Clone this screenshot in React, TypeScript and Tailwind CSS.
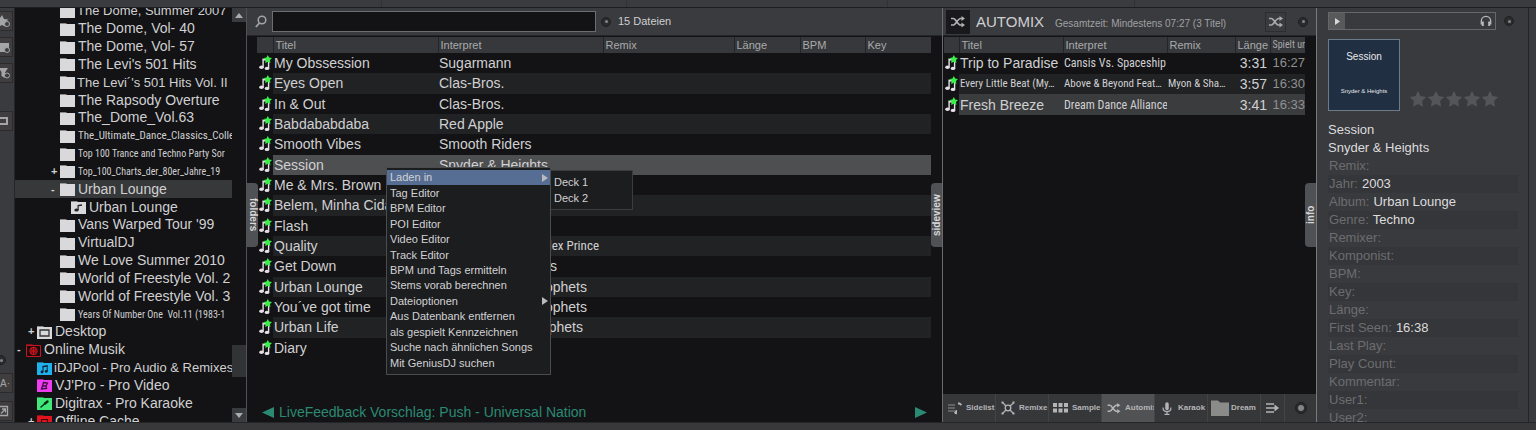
import type { ReactNode } from "react";
import { clsx } from "clsx";

const CONDENSED = "font-['Roboto_Condensed','Liberation_Sans',sans-serif]";

type IconKind = "folder" | "list" | "desktop" | "online" | "idj" | "vj" | "digi" | "offline";

type TreeNode = {
  name: string;
  level: 0 | 1 | 2 | 3;
  icon?: IconKind;
  mark?: "+" | "-";
  fit?: "tight" | "narrow" | "narrower";
  selected?: boolean;
};

const TREE: TreeNode[] = [
  { name: "The Dome, Summer 2007", level: 2, fit: "tight" },
  { name: "The Dome, Vol- 40", level: 2 },
  { name: "The Dome, Vol- 57", level: 2 },
  { name: "The Levi's 501 Hits", level: 2 },
  { name: "The Levi´'s 501 Hits Vol. II", level: 2, fit: "tight" },
  { name: "The Rapsody Overture", level: 2 },
  { name: "The_Dome_Vol.63", level: 2 },
  { name: "The_Ultimate_Dance_Classics_Colle", level: 2, fit: "narrow" },
  { name: "Top 100 Trance and Techno Party Sor", level: 2, fit: "narrower" },
  { name: "Top_100_Charts_der_80er_Jahre_19", level: 2, mark: "+", fit: "narrower" },
  { name: "Urban Lounge", level: 2, mark: "-", selected: true },
  { name: "Urban Lounge", level: 3, icon: "list" },
  { name: "Vans Warped Tour '99", level: 2 },
  { name: "VirtualDJ", level: 2 },
  { name: "We Love Summer 2010", level: 2 },
  { name: "World of Freestyle Vol. 2", level: 2 },
  { name: "World of Freestyle Vol. 3", level: 2 },
  { name: "Years Of Number One  Vol.11 (1983-1", level: 2, fit: "narrower" },
  { name: "Desktop", level: 1, icon: "desktop", mark: "+" },
  { name: "Online Musik", level: 0, icon: "online", mark: "-" },
  { name: "iDJPool - Pro Audio & Remixes", level: 1, icon: "idj", fit: "tight" },
  { name: "VJ'Pro - Pro Video", level: 1, icon: "vj" },
  { name: "Digitrax - Pro Karaoke", level: 1, icon: "digi" },
  { name: "Offline Cache", level: 1, icon: "offline", mark: "+" },
];

type Track = { title: string; artist: ReactNode; selected?: boolean };

const TRACKS: Track[] = [
  { title: "My Obssession", artist: "Sugarmann" },
  { title: "Eyes Open", artist: "Clas-Bros." },
  { title: "In & Out", artist: "Clas-Bros." },
  { title: "Babdababdaba", artist: "Red Apple" },
  { title: "Smooth Vibes", artist: "Smooth Riders" },
  { title: "Session", artist: "Snyder & Heights", selected: true },
  { title: "Me & Mrs. Brown", artist: "" },
  { title: "Belem, Minha Cidade", artist: "" },
  { title: "Flash", artist: "" },
  {
    title: "Quality",
    artist: <span className={clsx("block w-[160px] text-right text-[13px]", CONDENSED)}>Alex Prince</span>,
  },
  { title: "Get Down", artist: <span className="block w-[118px] text-right">Riders</span> },
  { title: "Urban Lounge", artist: <span className="block w-[148px] text-right">Prophets</span> },
  { title: "You´ve got time", artist: <span className="block w-[148px] text-right">Prophets</span> },
  { title: "Urban Life", artist: <span className="block w-[144px] text-right">Prophets</span> },
  { title: "Diary", artist: "" },
];

const AUTOMIX = [
  { title: "Trip to Paradise", artist: "Cansis Vs. Spaceship", remix: "", len: "3:31", at: "16:27" },
  { title: "Every Little Beat (My…", artist: "Above & Beyond Feat…", remix: "Myon & Sha…", len: "3:57", at: "16:30" },
  { title: "Fresh Breeze", artist: "Dream Dance Alliance", remix: "", len: "3:41", at: "16:33" },
];

const MENU = [
  "Laden in",
  "Tag Editor",
  "BPM Editor",
  "POI Editor",
  "Video Editor",
  "Track Editor",
  "BPM und Tags ermitteln",
  "Stems vorab berechnen",
  "Dateioptionen",
  "Aus Datenbank entfernen",
  "als gespielt Kennzeichnen",
  "Suche nach ähnlichen Songs",
  "Mit GeniusDJ suchen",
];

const INFO = [
  ["Remix", ""],
  ["Jahr", "2003"],
  ["Album", "Urban Lounge"],
  ["Genre", "Techno"],
  ["Remixer", ""],
  ["Komponist", ""],
  ["BPM", ""],
  ["Key", ""],
  ["Länge", ""],
  ["First Seen", "16:38"],
  ["Last Play", ""],
  ["Play Count", ""],
  ["Kommentar", ""],
  ["User1", ""],
  ["User2", ""],
];

const FOLDER_FILL: Record<IconKind, string> = {
  folder: "#d9d9db",
  list: "#d9d9db",
  desktop: "#d9d9db",
  online: "#c8141e",
  idj: "#1fb0ee",
  vj: "#f03cf0",
  digi: "#3fe878",
  offline: "#e0141e",
};

function FolderIcon({ kind = "folder" }: { kind?: IconKind }) {
  const fill = FOLDER_FILL[kind];
  return (
    <svg viewBox="0 0 15 14" className="h-[14px] w-[15px] shrink-0">
      <path d="M0 1h6l1.5 1.5H0z" fill={fill} opacity={0.6} />
      {kind === "online" ? (
        <path d="M.5 2.5h14v11H.5z" fill="#1c0a0c" stroke={fill} />
      ) : (
        <path d="M0 2h15v12H0z" fill={fill} />
      )}
      {kind === "list" && (
        <g fill="#222">
          <ellipse cx="5.5" cy="10" rx="2.2" ry="1.6" />
          <path d="M6.500 5h1.200v5H6.500zM6.500 5l4.500-.8v1.600l-4.500.8z" />
        </g>
      )}
      {kind === "desktop" && <path d="M3 5h9v6H3z" fill="none" stroke="#333" strokeWidth={1.3} />}
      {kind === "online" && (
        <g fill="none" stroke={fill} strokeWidth={1.1}>
          <circle cx="7.5" cy="8" r="3.6" />
          <path d="M4 8h7M7.5 4.4v7.2M5.5 5.2c1 1.8 1 3.8 0 5.6M9.5 5.2c-1 1.8-1 3.8 0 5.6" />
        </g>
      )}
      {kind === "idj" && (
        <g fill="#123">
          <path d="M5.5 5l5-1v1.600l-5 1z" />
          <path d="M5.5 5h1v6h-1zM9.7 4.500h1v6h-1z" />
          <circle cx="5" cy="11" r="1.4" />
          <circle cx="9.2" cy="10.4" r="1.4" />
        </g>
      )}
      {kind === "vj" && (
        <path d="M6.500 4.500l4 .5-1.500 3 .5 2.500-5 .5 1-3zM5.500 8h4" fill="none" stroke="#401040" strokeWidth={1.3} />
      )}
      {kind === "digi" && (
        <g stroke="#0c2c18" strokeLinecap="round">
          <path d="M4 11l4-3.500" strokeWidth={1.5} />
          <path d="M8 7.500l2.500-2" strokeWidth={2.4} />
        </g>
      )}
      {kind === "offline" && <path d="M4.500 5.500h6v6h-6z" fill="none" stroke="#400" strokeWidth={1.2} />}
    </svg>
  );
}

function TrackIcon() {
  return (
    <svg viewBox="0 0 14 16" className="block h-4 w-[14px]">
      <g fill="#e6dfe6">
        <ellipse cx="2.500" cy="12.200" rx="2.300" ry="1.700" />
        <ellipse cx="8" cy="13.400" rx="2.300" ry="1.700" />
        <path d="M3.400 3.500h1.400v8.700H3.400zM8.900 7h1.400v6.400H8.900zM3.400 3.500l4 .8v1.500l-4-.8z" />
      </g>
      <path
        d="M8.800 0l1.300 2.400 2.900.5-2 2.100.4 3-2.600-1.300L6.200 8l.4-3-2-2.100 2.900-.5z"
        fill="#3cf04c"
      />
    </svg>
  );
}

function ShuffleIcon({ className }: { className: string }) {
  return (
    <svg viewBox="0 0 14 12" className={className} fill="none" stroke="currentColor" strokeWidth={1.7}>
      <path d="M0 2.500h2.500c2 0 4.500 6.500 7 6.500H12M0 9h2.500C4.500 9 7 2.500 9.500 2.500H12" />
      <path d="M10.500 0L14 2.500 10.500 5zM10.500 6.500L14 9l-3.500 2.500z" fill="currentColor" stroke="none" />
    </svg>
  );
}

function Dot({ large }: { large?: boolean }) {
  return (
    <span
      className={clsx(
        "grid shrink-0 place-items-center rounded-full border border-[#1f2022] bg-[#2a2b2d]",
        large ? "size-3" : "size-[10px]",
      )}
    >
      <span className={clsx("rounded-full bg-[#858688]", large ? "size-[6px]" : "size-[3px]")} />
    </span>
  );
}

function SideTab({ label, side }: { label: string; side: "left" | "right" }) {
  return (
    <button
      className={clsx(
        "absolute top-[175px] flex h-16 w-[11px] items-center justify-center bg-[#505154] text-[10px] leading-none font-bold text-[#d8d8da] [writing-mode:vertical-rl]",
        side === "left" ? "left-0 rounded-r-[4px]" : "right-0 rotate-180 rounded-r-[4px]",
      )}
    >
      {label}
    </button>
  );
}

function ToolStrip() {
  const btn =
    "flex h-5 w-[13px] items-center overflow-hidden border border-l-0 border-[#2c2a2b] bg-[#403d3e] text-[#a4a5a7]";
  return (
    <div className="flex w-[15px] shrink-0 flex-col border-r border-[#242527] bg-[#3a3b3e] pt-[3px]">
      <button className={btn} aria-label="Favoriten">
        <svg viewBox="0 0 12 14" className="h-[14px] w-3 shrink-0">
          <path d="M2 1l2 4 4.500.5L5 8.500l1 4.500-4-2-2 1V4z" fill="currentColor" />
          <circle cx="7" cy="10" r="2.500" fill="#3a3b3e" stroke="currentColor" />
        </svg>
      </button>
      <button className={clsx(btn, "mt-[6px]")} aria-label="Virtueller Ordner">
        <svg viewBox="0 0 12 14" className="h-[14px] w-3 shrink-0">
          <path d="M0 3h9v9H0z" fill="currentColor" />
          <circle cx="7" cy="10" r="2.500" fill="#3a3b3e" stroke="currentColor" />
        </svg>
      </button>
      <button className={clsx(btn, "mt-[6px]")} aria-label="Filter">
        <svg viewBox="0 0 12 14" className="h-[14px] w-3 shrink-0">
          <path d="M0 2h8L5 6.500V12L1.500 10V6L0 4z" fill="currentColor" />
          <circle cx="7" cy="9.500" r="2.500" fill="#3a3b3e" stroke="currentColor" />
        </svg>
      </button>
      <button className={clsx(btn, "mt-[28px]")} aria-label="Ansicht">
        <span className="h-[8px] w-2 border-2 border-l-0 border-current" />
      </button>
      <div className="mt-auto flex flex-col gap-2">
        <span className="-ml-1">
          <Dot />
        </span>
        <button className={clsx(btn, "text-[10px]")}>A·</button>
        <button className={clsx(btn, "mb-px")} aria-label="Fenster">
          <svg viewBox="0 0 9 12" className="h-3 w-[9px]" fill="none" stroke="currentColor">
            <path d="M0 1.500h7.500v9H0M1 8.500l4-4M2 4h3.500v3.500" strokeWidth={1.3} />
          </svg>
        </button>
      </div>
    </div>
  );
}

const INDENT = ["pl-[2px]", "pl-[13px]", "pl-[36px]", "pl-[47px]"];

function FolderTree() {
  return (
    <nav className="flex w-[232px] shrink-0 overflow-hidden border-r border-[#515255]">
      <ul className="-mt-[6px] -mb-[8px] grid w-[217px] shrink-0 auto-rows-fr overflow-hidden">
        {TREE.map((n, i) => (
          <li
            key={i}
            className={clsx(
              "flex min-h-0 items-center overflow-hidden whitespace-pre",
              INDENT[n.level],
              n.selected && "bg-[#37383a]",
            )}
          >
            <span className="w-[9px] shrink-0 text-[11px] leading-none font-bold">{n.mark}</span>
            <FolderIcon kind={n.icon} />
            <span
              className={clsx(
                "leading-[17px]",
                !n.fit && "ml-[3px] text-[14px]",
                n.fit === "tight" && "ml-[2px] text-[13px]",
                n.fit === "narrow" && ["ml-[3px] text-[11px]", CONDENSED],
                n.fit === "narrower" && ["ml-[3px] text-[10px]", CONDENSED],
              )}
            >
              {n.name}
            </span>
          </li>
        ))}
      </ul>
      <div className="flex flex-1 flex-col">
        <button className="grid h-[14px] place-items-center bg-[#3a3b3e]" aria-label="Nach oben">
          <svg viewBox="0 0 8 5" className="h-[5px] w-2">
            <path d="M0 5L4 0l4 5z" fill="#aaabad" />
          </svg>
        </button>
        <div className="mt-auto mb-[31px] h-8 bg-[#323335]" />
        <button className="grid h-[14px] place-items-center bg-[#3a3b3e]" aria-label="Nach unten">
          <svg viewBox="0 0 8 5" className="h-[5px] w-2">
            <path d="M0 0l4 5 4-5z" fill="#aaabad" />
          </svg>
        </button>
      </div>
    </nav>
  );
}

function Th({ children }: { children?: ReactNode }) {
  return (
    <th className="h-4 overflow-hidden border-l border-[#242527] p-0 pl-[2px] text-left text-[11px] leading-4 font-normal whitespace-nowrap text-[#a9aaac] first:border-l-0">
      {children}
    </th>
  );
}

function ContextMenu() {
  return (
    <div className="absolute top-[159px] left-[139px] flex items-start text-[11px] leading-none text-[#d2d2d4]">
      <ul
        role="menu"
        className="grid h-[208px] w-[165px] auto-rows-fr border border-[#4b4c4e] bg-[#1c1d1f] pt-[2px] pb-[3px]"
      >
        {MENU.map((m) => (
          <li key={m} className="min-h-0">
            <button
              role="menuitem"
              className={clsx(
                "flex h-full w-full items-center justify-between pr-[2px] pl-[3px] whitespace-nowrap",
                m === "Laden in" && "bg-[#566e93]",
              )}
            >
              {m}
              {(m === "Laden in" || m === "Dateioptionen") && (
                <svg viewBox="0 0 6 8" className="h-2 w-[6px]">
                  <path d="M0 0l6 4-6 4z" fill="#b9babc" />
                </svg>
              )}
            </button>
          </li>
        ))}
      </ul>
      <ul role="menu" className="mt-[3px] w-[82px] border border-l-0 border-[#3c3d3f] bg-[#1c1d1f] py-[3px]">
        <li>
          <button className="h-4 w-full pl-[3px] text-left">Deck 1</button>
        </li>
        <li>
          <button className="h-4 w-full pl-[3px] text-left">Deck 2</button>
        </li>
      </ul>
    </div>
  );
}

function Browser() {
  return (
    <main className="relative flex min-w-0 flex-1 flex-col border-r border-[#6a6b6d]">
      <div className="flex h-7 shrink-0 items-center border-b border-[#242527] bg-[#3a3b3e] pl-2">
        <svg viewBox="0 0 12 13" className="h-[13px] w-3" fill="none" stroke="#a4a5a7" strokeWidth={1.5}>
          <circle cx="7" cy="5" r="3.8" />
          <path d="M4.500 8L.8 12" strokeWidth={1.8} />
        </svg>
        <input
          aria-label="Suche"
          className="ml-[5px] h-[21px] w-[324px] border border-[#6c6d6f] bg-[#131315] px-1 text-[13px] outline-none"
        />
        <span className="ml-[5px]">
          <Dot />
        </span>
        <span className="ml-[7px] text-[11px] text-[#cfcfd1]">15 Dateien</span>
      </div>
      <div className="pt-px pr-[11px] pl-[10px]">
        <table className="h-[321px] w-full table-fixed border-collapse">
          <colgroup>
            <col className="w-4" />
            <col className="w-[165px]" />
            <col className="w-[165px]" />
            <col />
            <col className="w-[66px]" />
            <col className="w-[65px]" />
            <col className="w-[66px]" />
          </colgroup>
          <thead>
            <tr className="h-4 bg-[#37383b]">
              <Th />
              <Th>Titel</Th>
              <Th>Interpret</Th>
              <Th>Remix</Th>
              <Th>Länge</Th>
              <Th>BPM</Th>
              <Th>Key</Th>
            </tr>
          </thead>
          <tbody>
            {TRACKS.map((t, i) => {
              const bg = t.selected ? "bg-[#4e4f51]" : i % 2 === 1 && "bg-[#212224]";
              return (
                <tr key={t.title}>
                  <td className="p-0 pl-[2px]">
                    <TrackIcon />
                  </td>
                  <td className={clsx("overflow-hidden p-0 pl-px text-[14px] leading-[18px] whitespace-nowrap", bg)}>
                    {t.title}
                  </td>
                  <td className={clsx("p-0 pl-px text-[14px] leading-[18px] whitespace-nowrap", bg)}>{t.artist}</td>
                  <td className={clsx("p-0", bg)} colSpan={4} />
                </tr>
              );
            })}
          </tbody>
        </table>
      </div>
      <div className="mt-auto flex h-5 items-center pr-[15px] pl-[15px] text-[14px] text-[#2b8a74]">
        <button aria-label="Zurück">
          <svg viewBox="0 0 12 11" className="h-[11px] w-3">
            <path d="M12 0v11L0 5.500z" fill="currentColor" />
          </svg>
        </button>
        <span className="ml-[5px]">LiveFeedback Vorschlag: Push - Universal Nation</span>
        <button className="ml-auto" aria-label="Weiter">
          <svg viewBox="0 0 12 11" className="h-[11px] w-3">
            <path d="M0 0v11l12-5.500z" fill="currentColor" />
          </svg>
        </button>
      </div>
      <SideTab label="folders" side="left" />
      <SideTab label="sideview" side="right" />
      <ContextMenu />
    </main>
  );
}

const TABS: { label: string; icon: ReactNode }[] = [
  {
    label: "Sidelist",
    icon: (
      <svg viewBox="0 0 14 14" className="h-[14px] w-[14px] shrink-0">
        <path d="M0 4h7M0 7h7M0 10h7" stroke="#8f9092" />
        <path d="M10 2.500h1.500l2 1.500" stroke="currentColor" strokeWidth={1.8} fill="none" />
        <path d="M8.500 9v4l-2-1z" fill="currentColor" stroke="currentColor" />
      </svg>
    ),
  },
  {
    label: "Remixe",
    icon: (
      <svg
        viewBox="0 0 14 14"
        className="h-[14px] w-[14px] shrink-0"
        fill="none"
        stroke="currentColor"
        strokeWidth={1.3}
      >
        <circle cx="7" cy="7" r="2.8" />
        <path d="M5 5L1.500 1.500M9 5l3.500-3M5 9l-3.500 3.500M9 9l3.500 3.500" />
        <path d="M.5 1.500h2M11.500 1.500h2M.5 12.500h2M11.500 12.500h2" strokeWidth={2} />
      </svg>
    ),
  },
  {
    label: "Sample",
    icon: (
      <svg viewBox="0 0 16 10" className="h-[10px] w-4 shrink-0">
        <path
          d="M0 0h4v4H0zM5.500 0h4v4h-4zM11 0h4v4h-4zM0 5.500h4v4H0zM5.500 5.500h4v4h-4zM11 5.500h4v4h-4z"
          fill="currentColor"
        />
      </svg>
    ),
  },
  { label: "Automix", icon: <ShuffleIcon className="h-[11px] w-[14px] shrink-0" /> },
  {
    label: "Karaok",
    icon: (
      <svg viewBox="0 0 10 13" className="h-[13px] w-[10px] shrink-0" fill="none" stroke="currentColor">
        <path d="M5 2v4.500" strokeWidth={3.5} strokeLinecap="round" />
        <path d="M1 5.500c0 5.500 8 5.500 8 0M5 9.500V12M2.500 12.300h5" strokeWidth={1.2} />
      </svg>
    ),
  },
  {
    label: "Dream",
    icon: (
      <svg viewBox="0 0 18 16" className="h-4 w-[18px] shrink-0">
        <path d="M0 .5h7l2 2h9V16H0z" fill="#8b8b89" />
      </svg>
    ),
  },
];

function Automix() {
  const cell = "overflow-hidden p-0 whitespace-nowrap leading-[18px]";
  return (
    <section className="relative flex w-[374px] shrink-0 flex-col border-r border-[#7a7b7d]">
      <header className="flex h-7 shrink-0 items-center border-b border-[#242527] bg-[#3a3b3e] pr-2 pl-[3px]">
        <span className="grid h-6 w-6 place-items-center bg-[#19191b] text-[#b0b1b3]">
          <ShuffleIcon className="h-3 w-[14px]" />
        </span>
        <h2 className="ml-[6px] w-[72px] text-[15px] leading-none text-[#cfcfd1]">AUTOMIX</h2>
        <span className="mt-[5px] ml-[7px] text-[10px] leading-none whitespace-nowrap text-[#a0a1a3]">
          Gesamtzeit: Mindestens 07:27 (3 Titel)
        </span>
        <button
          aria-label="Mischen"
          className="ml-auto grid h-5 w-[21px] place-items-center border border-[#2c2d2f] text-[#a8a9ab]"
        >
          <ShuffleIcon className="h-3 w-[14px]" />
        </button>
        <span className="ml-[12px]">
          <Dot />
        </span>
      </header>
      <div className="pt-px pr-[11px] pl-px">
        <table className="h-[78px] w-full table-fixed border-collapse">
          <colgroup>
            <col className="w-[15px]" />
            <col className="w-[104px]" />
            <col className="w-[104px]" />
            <col />
            <col className="w-[35px]" />
            <col className="w-[35px]" />
          </colgroup>
          <thead>
            <tr className="h-4 bg-[#37383b]">
              <Th />
              <Th>Titel</Th>
              <Th>Interpret</Th>
              <Th>Remix</Th>
              <Th>Länge</Th>
              <Th>
                <span className={clsx("block text-[10px]", CONDENSED)}>Spielt um</span>
              </Th>
            </tr>
          </thead>
          <tbody>
            {AUTOMIX.map((t, i) => {
              const bg = ["", "bg-[#212224]", "bg-[#3b3c3e]"][i];
              const small = clsx(cell, bg, CONDENSED, i === 1 ? "text-[11px]" : "text-[12px]");
              return (
                <tr key={t.title}>
                  <td className="p-0 pl-px">
                    <TrackIcon />
                  </td>
                  <td className={clsx(i === 1 ? small : clsx(cell, bg, "text-[14px]"), "pl-px")}>{t.title}</td>
                  <td className={clsx(small, "pl-px")}>{t.artist}</td>
                  <td className={clsx(small, "pl-px")}>{t.remix}</td>
                  <td className={clsx(cell, bg, "pr-[3px] text-right text-[14px]")}>{t.len}</td>
                  <td className={clsx(cell, bg, "text-right text-[13px] text-[#8f9092]")}>{t.at}</td>
                </tr>
              );
            })}
          </tbody>
        </table>
      </div>
      <div className="mt-auto flex h-7 bg-[#363739] text-[8px] font-bold text-[#b4b5b7]">
        {TABS.map((t) => (
          <button
            key={t.label}
            className={clsx(
              "flex w-[53px] shrink-0 items-center gap-[2px] overflow-hidden border-r border-[#434446] pl-[3px] whitespace-nowrap",
              t.label === "Automix" && "bg-[#515254]",
            )}
          >
            <span className="flex w-[18px] shrink-0 justify-center">{t.icon}</span>
            {t.label}
          </button>
        ))}
        <button aria-label="Mehr" className="grid w-6 place-items-center border-r border-[#434446]">
          <svg viewBox="0 0 13 10" className="h-[10px] w-[13px]">
            <path d="M0 1h8M0 5h10M0 9h8" stroke="currentColor" strokeWidth={1.4} />
            <path d="M8.500 1.500L13 5 8.500 8.500z" fill="currentColor" />
          </svg>
        </button>
        <span className="grid flex-1 place-items-center">
          <Dot large />
        </span>
      </div>
      <SideTab label="info" side="right" />
    </section>
  );
}

function InfoPanel() {
  return (
    <aside className="w-[212px] shrink-0 overflow-hidden border-r border-[#242527] bg-[#393a3d] pt-1 pl-[11px] text-[13px]">
      <div className="flex items-center">
        <div className="flex h-[18px] w-[168px] items-center border border-[#66676a]">
          <button aria-label="Vorhören" className="grid h-full w-4 place-items-center bg-[#58595b]">
            <svg viewBox="0 0 5 7" className="h-[7px] w-[5px]">
              <path d="M0 0l5 3.500L0 7z" fill="#d8d8da" />
            </svg>
          </button>
          <svg viewBox="0 0 12 12" className="mr-[3px] ml-auto h-3 w-3" fill="none" stroke="#b9babc" strokeWidth={1.3}>
            <path d="M1.300 9.500V6a4.700 4.700 0 0 1 9.400 0v3.500" />
            <path d="M2.800 6.500v4.500M9.200 6.500v4.500" strokeWidth={2} />
          </svg>
        </div>
        <span className="ml-2">
          <Dot />
        </span>
      </div>
      <div className="mt-[9px] flex items-end">
        <div className="flex h-[72px] w-[72px] flex-col items-center border border-[#6d7a88] bg-[#202f42] pt-3 leading-none text-[#e8e8ea]">
          <span className="text-[10px]">Session</span>
          <span className="mt-[26px] text-[6px]">Snyder &amp; Heights</span>
        </div>
        <div className="mb-1 ml-[9px] flex">
          {[1, 2, 3, 4, 5].map((n) => (
            <button key={n} aria-label={`${n} Sterne`}>
              <svg viewBox="0 0 18 16" className="block h-4 w-[18px]">
                <path d="M9 0l2.600 5 5.700.9-4.200 4 1 5.800L9 13l-5.100 2.700 1-5.800-4.200-4L6.400 5z" fill="#545558" />
              </svg>
            </button>
          ))}
        </div>
      </div>
      <div className="mt-[10px] mr-[10px] leading-[18px] text-[#dcdcde]">
        <p>Session</p>
        <p>Snyder &amp; Heights</p>
        <dl>
          {INFO.map(([label, value], i) => (
            <div key={label} className={clsx("flex h-[18px] gap-1 pl-px", i % 2 === 1 && "bg-[#353639]")}>
              <dt className="text-[#6c6d70]">{label}:</dt>
              <dd>{value}</dd>
            </div>
          ))}
        </dl>
      </div>
    </aside>
  );
}

export default function App() {
  return (
    <div className="flex h-screen flex-col overflow-hidden bg-[#131315] font-['Liberation_Sans',Arial,sans-serif] text-[#d0d0d2]">
      <div className="grid h-2 shrink-0 grid-cols-[382fr_245fr_261fr_247fr_401fr] divide-x divide-[#303133] border-b border-[#1d1e20] bg-[#3a3b3e]">
        <span />
        <span />
        <span />
        <span />
        <span />
      </div>
      <div className="flex min-h-0 flex-1">
        <ToolStrip />
        <FolderTree />
        <Browser />
        <Automix />
        <InfoPanel />
        <div className="w-[7px] shrink-0 bg-[#3a3b3e]" />
      </div>
      <div className="h-2 shrink-0 border-t border-[#242527] bg-[#38383b]" />
    </div>
  );
}
